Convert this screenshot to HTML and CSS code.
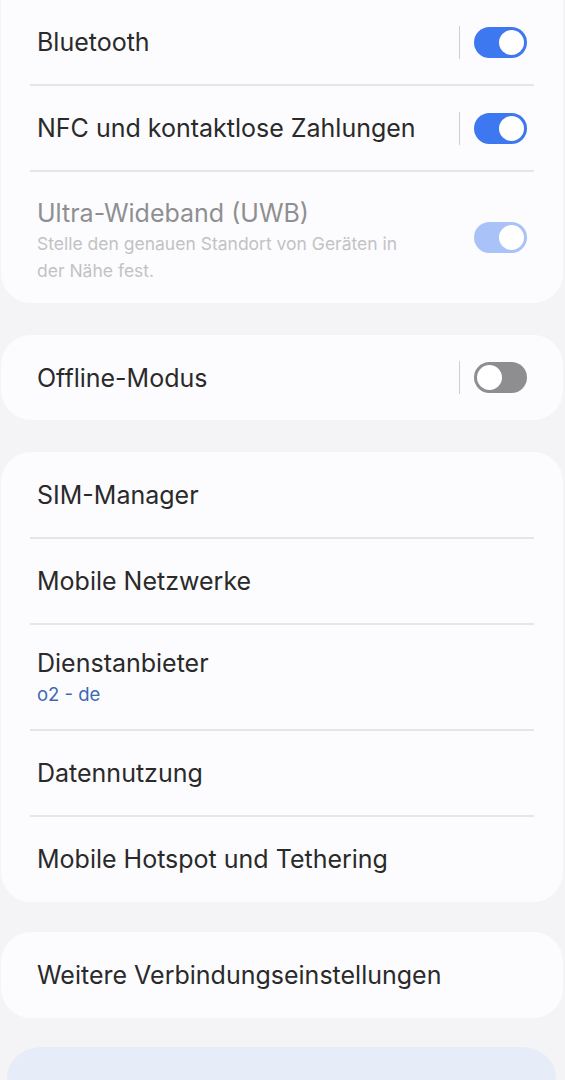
FILE: index.html
```html
<!DOCTYPE html>
<html lang="de">
<head>
    <meta charset="UTF-8">
    <meta name="viewport" content="width=device-width, initial-scale=1.0">
    <title>Verbindungen</title>
    <link rel="stylesheet" href="styles.css">
</head>
<body>
    <div class="settings">
        <div class="card card-first">
            <div class="row">
                <span class="title">Bluetooth</span>
                <div class="switch-wrap">
                    <span class="sep"></span>
                    <span class="switch on"><span class="knob"></span></span>
                </div>
            </div>
            <div class="row">
                <span class="title">NFC und kontaktlose Zahlungen</span>
                <div class="switch-wrap">
                    <span class="sep"></span>
                    <span class="switch on"><span class="knob"></span></span>
                </div>
            </div>
            <div class="row row-tall disabled">
                <div class="text">
                    <span class="title">Ultra-Wideband (UWB)</span>
                    <span class="summary">Stelle den genauen Standort von Geräten in der Nähe fest.</span>
                </div>
                <div class="switch-wrap">
                    <span class="switch on dim"><span class="knob"></span></span>
                </div>
            </div>
        </div>

        <div class="card card-offline">
            <div class="row">
                <span class="title">Offline-Modus</span>
                <div class="switch-wrap">
                    <span class="sep"></span>
                    <span class="switch off"><span class="knob"></span></span>
                </div>
            </div>
        </div>

        <div class="card">
            <div class="row"><span class="title">SIM-Manager</span></div>
            <div class="row"><span class="title">Mobile Netzwerke</span></div>
            <div class="row row-sub">
                <div class="text">
                    <span class="title">Dienstanbieter</span>
                    <span class="value">o2 - de</span>
                </div>
            </div>
            <div class="row"><span class="title">Datennutzung</span></div>
            <div class="row"><span class="title">Mobile Hotspot und Tethering</span></div>
        </div>

        <div class="card card-more">
            <div class="row"><span class="title">Weitere Verbindungseinstellungen</span></div>
        </div>

        <div class="hint-card"></div>
    </div>
</body>
</html>
```

FILE: styles.css
```css
body {
    margin: 0;
    background-color: #f4f4f6;
    font-family: Inter, "Noto Sans", sans-serif;
    color: #2a2a2a;
    overflow: hidden;
}

.settings {
    display: flex;
    flex-direction: column;
    gap: 32px;
    padding: 0 2px 0 1px;
    margin-top: -1px;
}

.card {
    background-color: #fcfcfe;
    border-radius: 30px;
}

.card-first {
    border-top-left-radius: 0;
    border-top-right-radius: 0;
}

.card-offline .row {
    height: 85px;
}

.card-more {
    margin-top: -2px;
}

.row {
    position: relative;
    display: flex;
    align-items: center;
    justify-content: space-between;
    height: 86px;
    padding: 0 36px;
}

/* trennlinie zwischen den zeilen */
.row + .row::before {
    content: "";
    position: absolute;
    top: -1px;
    left: 29px;
    right: 29px;
    height: 2px;
    background-color: #e6e6e8;
}

.row-tall {
    height: 132px;
}

.row-sub {
    height: 106px;
}

.text {
    display: flex;
    flex-direction: column;
}

.title {
    font-size: 25px;
    line-height: 32px;
}

.summary {
    font-size: 17.5px;
    line-height: 27px;
    color: #c2c2c4;
    max-width: 372px;
    margin-top: 1px;
}

.value {
    font-size: 18.5px;
    line-height: 26px;
    color: #3d69b2;
    margin-top: 2px;
}

.row-tall .text {
    margin-top: 6px;
}

.disabled .title {
    color: #8f8f91;
}

.switch-wrap {
    display: flex;
    align-items: center;
    gap: 14px;
}

.sep {
    width: 1px;
    height: 33px;
    background-color: #cfcfd1;
}

.switch {
    display: flex;
    align-items: center;
    width: 53px;
    height: 31px;
    box-sizing: border-box;
    padding: 3px;
    border-radius: 16px;
}

.switch .knob {
    width: 25px;
    height: 25px;
    border-radius: 50%;
    background-color: #fff;
}

.switch.on {
    background-color: #3e78f0;
    justify-content: flex-end;
}

.switch.dim {
    background-color: #a9c3f8;
}

.switch.off {
    background-color: #8e8e90;
    justify-content: flex-start;
}

.hint-card {
    height: 60px;
    margin: -3px 7px 0 6px;
    background-color: #e6ecf8;
    border-radius: 40px / 34px;
}
```
